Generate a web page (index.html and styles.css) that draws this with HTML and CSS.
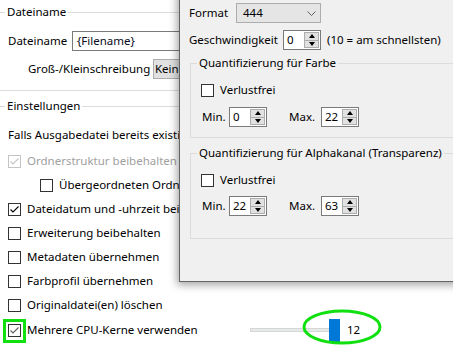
FILE: index.html
```html
<!DOCTYPE html>
<html lang="de">
<head>
<meta charset="utf-8">
<title>Einstellungen</title>
<link rel="stylesheet" href="styles.css">
</head>
<body>
<div class="screen">
  <div class="main">
    <div class="ghead"><span class="gline lead"></span><span class="gtext">Dateiname</span><span class="gline"></span></div>
    <div class="frow r-name"><span class="lbl">Dateiname</span><div class="textbox">{Filename}</div></div>
    <div class="frow r-case"><span class="lbl">Groß-/Kleinschreibung</span><div class="cbtn">Keine Änderung</div></div>
    <div class="sep"></div>
    <div class="ghead"><span class="gline lead"></span><span class="gtext">Einstellungen</span><span class="gline"></span></div>
    <div class="plain">Falls Ausgabedatei bereits existiert: Überspringen</div>
    <div class="cbrow disabled"><span class="cb"><svg viewBox="0 0 13 13"><polyline points="2.5,6.5 5,9 10.5,3.5"/></svg></span>Ordnerstruktur beibehalten</div>
    <div class="cbrow indent"><span class="cb"></span>Übergeordneten Ordner übernehmen</div>
    <div class="cbrow"><span class="cb"><svg viewBox="0 0 13 13"><polyline points="2.5,6.5 5,9 10.5,3.5"/></svg></span>Dateidatum und -uhrzeit beibehalten</div>
    <div class="cbrow"><span class="cb"></span>Erweiterung beibehalten</div>
    <div class="cbrow"><span class="cb"></span>Metadaten übernehmen</div>
    <div class="cbrow"><span class="cb"></span>Farbprofil übernehmen</div>
    <div class="cbrow"><span class="cb"></span>Originaldatei(en) löschen</div>
    <div class="cbrow cpu">
      <span class="cb soft"><svg viewBox="0 0 13 13"><polyline points="2.5,6.5 5,9 10.5,3.5"/></svg></span><span class="cpu-label">Mehrere CPU-Kerne verwenden</span>
      <div class="slider"><div class="track"></div><div class="thumb"></div></div>
      <span class="slval">12</span>
    </div>
  </div>

  <div class="popup">
    <div class="prow r-format"><span class="plbl">Format</span><div class="combo"><span>444</span><svg class="chev" viewBox="0 0 9 5"><polyline points="0.5,0.5 4.5,4.5 8.5,0.5"/></svg></div></div>
    <div class="prow r-speed"><span class="plbl">Geschwindigkeit</span>
      <div class="spin"><span class="sv">0</span><span class="sbtns"><span class="sb up"></span><span class="sb down"></span></span></div>
      <span class="hint">(10 = am schnellsten)</span>
    </div>
    <fieldset class="grp g1">
      <legend>Quantifizierung für Farbe</legend>
      <div class="pcb"><span class="cb"></span>Verlustfrei</div>
      <div class="mm">
        <span class="mlbl">Min.</span>
        <div class="spin"><span class="sv">0</span><span class="sbtns"><span class="sb up"></span><span class="sb down"></span></span></div>
        <span class="mlbl max">Max.</span>
        <div class="spin"><span class="sv">22</span><span class="sbtns"><span class="sb up"></span><span class="sb down"></span></span></div>
      </div>
    </fieldset>
    <fieldset class="grp g2">
      <legend>Quantifizierung für Alphakanal (Transparenz)</legend>
      <div class="pcb"><span class="cb"></span>Verlustfrei</div>
      <div class="mm">
        <span class="mlbl">Min.</span>
        <div class="spin"><span class="sv">22</span><span class="sbtns"><span class="sb up"></span><span class="sb down"></span></span></div>
        <span class="mlbl max">Max.</span>
        <div class="spin"><span class="sv">63</span><span class="sbtns"><span class="sb up"></span><span class="sb down"></span></span></div>
      </div>
    </fieldset>
  </div>

  <div class="mark-box"></div>
  <svg class="mark-ellipse" viewBox="0 0 80 36"><ellipse cx="40" cy="18" rx="38" ry="16"/></svg>
</div>
</body>
</html>
```
FILE: styles.css
```css
* { box-sizing: border-box; }
html, body { margin: 0; padding: 0; background: #fff; }
body {
  font-family: "Noto Sans", "DejaVu Sans", sans-serif;
  font-size: 11.5px;
  line-height: 16px;
  color: #000;
}
.screen {
  position: relative;
  width: 453px;
  height: 345px;
  overflow: hidden;
  background: #fff;
}
.main {
  display: flex;
  flex-direction: column;
  width: 453px;
}
.ghead {
  display: flex;
  align-items: center;
  height: 16px;
  margin-top: 4px;
}
.gline { flex: 1; height: 1px; background: #dcdcdc; }
.gline.lead { flex: 0 0 5px; }
.gtext { padding: 0 2px; white-space: nowrap; }
.frow { display: flex; align-items: center; height: 20px; white-space: nowrap; }
.r-name { margin-top: 11px; }
.r-name .lbl { margin-left: 8px; width: 64px; }
.textbox {
  width: 200px; height: 20px;
  border: 1px solid #7a7a7a;
  padding-left: 4px;
  line-height: 18px;
  color: #0a0a20;
}
.r-case { margin-top: 8px; }
.r-case .lbl { margin-left: 28px; width: 125px; }
.cbtn {
  width: 150px; height: 20px;
  background: #e1e1e1;
  border: 1px solid #adadad;
  padding-left: 1px;
  line-height: 18px;
}
.sep { margin-top: 11px; height: 1px; background: #dcdcdc; }
.sep + .ghead { margin-top: 7px; }
.plain { margin-top: 13px; margin-left: 8px; height: 16px; white-space: nowrap; }
.cbrow {
  display: flex;
  align-items: center;
  height: 24px;
  padding-left: 8px;
  white-space: nowrap;
}
.plain + .cbrow { margin-top: 6px; }
.cbrow.indent { padding-left: 40px; }
.cbrow.cpu { margin-top: 1px; }
.cb {
  flex: 0 0 13px;
  width: 13px; height: 13px;
  border: 1px solid #333;
  background: #fff;
  margin-right: 6px;
  display: flex;
}
.cb svg { width: 13px; height: 13px; margin: -1px; }
.cb polyline { fill: none; stroke: #000; stroke-width: 1.1; }
.cb.soft polyline { stroke: #606060; }
.disabled { color: #a0a0a0; }
.disabled .cb { border-color: #c4c4c4; }
.disabled .cb polyline { stroke: #c4c4c4; }
.cpu-label { width: 223px; overflow: hidden; }
.slider { position: relative; width: 90px; height: 23px; }
.track {
  position: absolute; left: 0; right: 0; top: 9px; height: 4px;
  background: #e7eaea; border: 1px solid #d6d6d6;
}
.thumb {
  position: absolute; right: 0; top: 0; width: 11px; height: 23px;
  background: #0078d7;
}
.slval { margin-left: 7px; }

.popup {
  position: absolute;
  left: 179px;
  top: -20px;
  width: 300px;
  height: 302px;
  background: #f0f0f0;
  border-left: 1px solid #646464;
  border-bottom: 1px solid #646464;
  box-shadow: -2px 3px 8px rgba(0,0,0,0.35);
  padding: 23px 0 0 9px;
  white-space: nowrap;
}
.prow { display: flex; align-items: center; height: 20px; }
.r-format .plbl { width: 47px; }
.combo {
  display: flex; align-items: center; justify-content: space-between;
  width: 85px; height: 20px;
  background: #e5e5e5; border: 1px solid #adadad;
  padding: 0 4px 0 6px;
}
.chev { width: 9px; height: 5px; }
.chev polyline { fill: none; stroke: #606060; stroke-width: 1; }
.r-speed { margin-top: 7px; }
.r-speed .plbl { width: 94px; }
.hint { margin-left: 6px; }
.spin {
  display: flex; align-items: stretch;
  width: 38px; height: 20px;
  background: #fff; border: 1px solid #7a7a7a;
}
.sv { flex: 1; padding-left: 3px; line-height: 18px; }
.sbtns {
  display: flex; flex-direction: column;
  width: 15px; margin: 1px;
  border: 1px solid #adadad;
  background: #e1e1e1;
}
.sb { flex: 1; display: flex; align-items: center; justify-content: center; }
.sb.up { border-bottom: 1px solid #adadad; }
.sb.up::after {
  content: ""; border-left: 3px solid transparent; border-right: 3px solid transparent;
  border-bottom: 4px solid #000;
}
.sb.down::after {
  content: ""; border-left: 3px solid transparent; border-right: 3px solid transparent;
  border-top: 4px solid #000;
}
.grp {
  margin: 5px 0 0 1px;
  padding: 0 0 10px 6px;
  border: 1px solid #dcdcdc;
  border-right: none;
  width: 320px;
  min-width: 0;
}
.grp legend { padding: 0 2px; line-height: 16px; }
.pcb { display: flex; align-items: center; height: 14px; margin-top: 12px; padding-left: 4px; }
.mm { display: flex; align-items: center; height: 20px; margin-top: 10px; }
.mlbl { width: 32px; padding-left: 5px; }
.mlbl.max { margin-left: 22px; padding-left: 0; }
.g2 { margin-top: 7px; padding-bottom: 22px; }
.g2 .mm { margin-top: 9px; }

.mark-box {
  position: absolute; left: 3px; top: 319px; width: 23px; height: 24px;
  border: 3px solid #10e010;
}
.mark-ellipse {
  position: absolute; left: 302px; top: 309px; width: 80px; height: 36px;
  overflow: visible;
}
.mark-ellipse ellipse { fill: none; stroke: #10e010; stroke-width: 3; }
```
